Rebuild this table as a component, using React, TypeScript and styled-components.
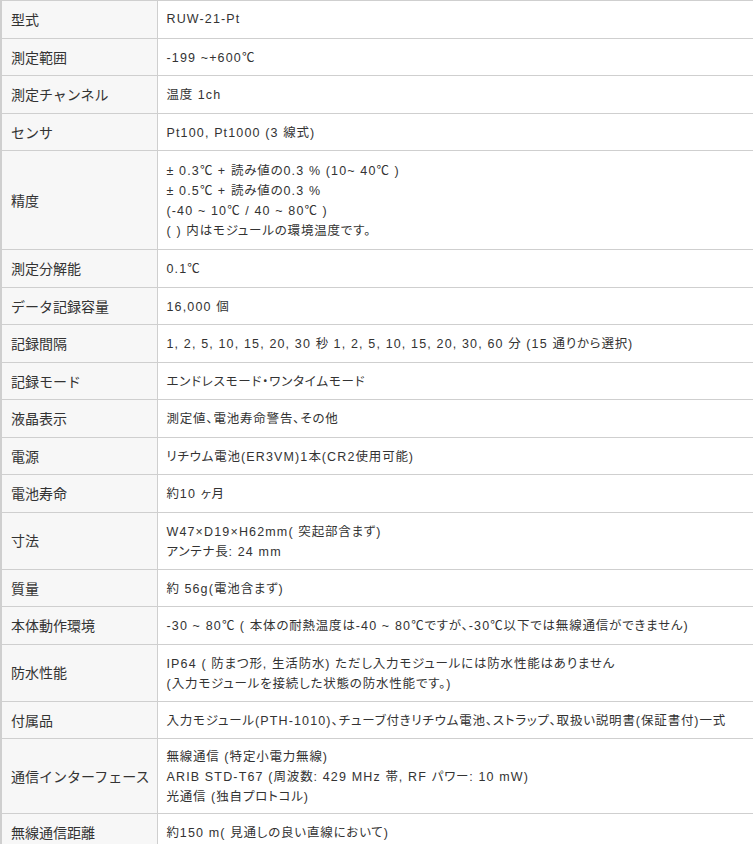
import styled, { createGlobalStyle } from 'styled-components';

const GlobalStyle = createGlobalStyle`
    html, body {
        margin: 0;
        padding: 0;
        background: #ffffff;
        overflow: hidden;
    }
    body {
        font-family: 'Liberation Sans', 'Noto Sans CJK JP', sans-serif;
        color: #333333;
    }
`;

interface Spec {
    label: string;
    lines: string[];
}

const specs: Spec[] = [
    { label: '型式', lines: ['RUW-21-Pt'] },
    { label: '測定範囲', lines: ['-199 ~+600℃'] },
    { label: '測定チャンネル', lines: ['温度 1ch'] },
    { label: 'センサ', lines: ['Pt100, Pt1000 (3 線式)'] },
    {
        label: '精度',
        lines: [
            '± 0.3℃ + 読み値の0.3 % (10~ 40℃ )',
            '± 0.5℃ + 読み値の0.3 %',
            '(-40 ~ 10℃ / 40 ~ 80℃ )',
            '( ) 内はモジュールの環境温度です。',
        ],
    },
    { label: '測定分解能', lines: ['0.1℃'] },
    { label: 'データ記録容量', lines: ['16,000 個'] },
    { label: '記録間隔', lines: ['1, 2, 5, 10, 15, 20, 30 秒 1, 2, 5, 10, 15, 20, 30, 60 分 (15 通りから選択)'] },
    { label: '記録モード', lines: ['エンドレスモード・ワンタイムモード'] },
    { label: '液晶表示', lines: ['測定値、電池寿命警告、その他'] },
    { label: '電源', lines: ['リチウム電池(ER3VM)1本(CR2使用可能)'] },
    { label: '電池寿命', lines: ['約10 ヶ月'] },
    { label: '寸法', lines: ['W47×D19×H62mm( 突起部含まず)', 'アンテナ長: 24 mm'] },
    { label: '質量', lines: ['約 56g(電池含まず)'] },
    {
        label: '本体動作環境',
        lines: ['-30 ~ 80℃ ( 本体の耐熱温度は-40 ~ 80℃ですが、-30℃以下では無線通信ができません)'],
    },
    {
        label: '防水性能',
        lines: [
            'IP64 ( 防まつ形, 生活防水) ただし入力モジュールには防水性能はありません',
            '(入力モジュールを接続した状態の防水性能です。)',
        ],
    },
    {
        label: '付属品',
        lines: ['入力モジュール(PTH-1010)、チューブ付きリチウム電池、ストラップ、取扱い説明書(保証書付)一式'],
    },
    {
        label: '通信インターフェース',
        lines: ['無線通信 (特定小電力無線)', 'ARIB STD-T67 (周波数: 429 MHz 帯, RF パワー: 10 mW)', '光通信 (独自プロトコル)'],
    },
    { label: '無線通信距離', lines: ['約150 m( 見通しの良い直線において)'] },
];

// split a line into latin / japanese runs so each can get its own spacing
const CJK = /([\u3000-\u30ff\u3400-\u9fff\uff00-\uffef℃]+)/;

const Page = styled.div`
    width: 753px;
    height: 844px;
    overflow: hidden;
`;

const SpecTable = styled.table`
    width: 770px;
    border-collapse: collapse;
    border: 1px solid #cfcfcf;
    border-left-width: 2px;
`;

const LabelCell = styled.th`
    width: 138px;
    padding: 8px 8px 8px 9px;
    background: #f7f7f7;
    border: 1px solid #cfcfcf;
    font-family: 'Noto Sans CJK JP', sans-serif;
    font-size: 14px;
    font-weight: 400;
    line-height: 20.5px;
    text-align: left;
    vertical-align: middle;
    color: #333333;
    white-space: nowrap;
`;

const ValueCell = styled.td<{ $pad: number }>`
    padding: ${(p) => p.$pad}px 8px;
    border: 1px solid #cfcfcf;
    font-family: 'Liberation Sans', 'Noto Sans CJK JP', sans-serif;
    font-size: 12.5px;
    line-height: 20px;
    vertical-align: middle;
    color: #333333;
    white-space: nowrap;
`;

const Line = styled.div`
    display: block;
    height: 20px;
`;

const Latin = styled.span`
    letter-spacing: 1.15px;
`;

const Kana = styled.span`
    font-family: 'Noto Sans CJK JP', sans-serif;
    font-feature-settings: 'palt';
    letter-spacing: 0.8px;
`;

function cellPadding(count: number) {
    if (count > 3) return 9;
    if (count === 3) return 7;
    return 8;
}

function SpecLine({ text }: { text: string }) {
    const parts = text.split(CJK).filter((part) => part.length > 0);
    return (
        <Line>
            {parts.map((part, i) =>
                CJK.test(part) ? <Kana key={i}>{part}</Kana> : <Latin key={i}>{part}</Latin>,
            )}
        </Line>
    );
}

export default function App() {
    return (
        <Page>
            <GlobalStyle />
            <SpecTable>
                <tbody>
                    {specs.map((spec) => (
                        <tr key={spec.label}>
                            <LabelCell>{spec.label}</LabelCell>
                            <ValueCell $pad={cellPadding(spec.lines.length)}>
                                {spec.lines.map((line) => (
                                    <SpecLine key={line} text={line} />
                                ))}
                            </ValueCell>
                        </tr>
                    ))}
                </tbody>
            </SpecTable>
        </Page>
    );
}
